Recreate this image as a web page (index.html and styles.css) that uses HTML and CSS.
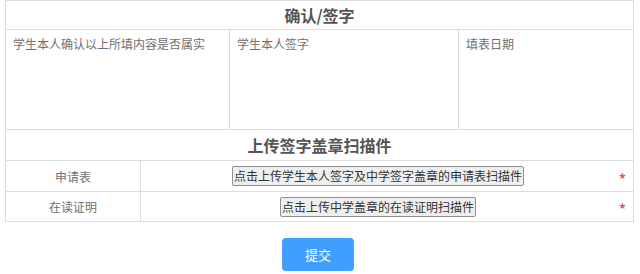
FILE: index.html
```html
<!DOCTYPE html>
<html lang="zh-CN">
<head>
<meta charset="utf-8">
<title>确认/签字</title>
<link rel="stylesheet" href="styles.css">
</head>
<body>
<div class="page">
  <table class="grid sign">
    <colgroup><col class="w1"><col class="w2"><col class="w3"></colgroup>
    <tr><th colspan="3" class="title t1">确认/签字</th></tr>
    <tr class="sign-row">
      <td>学生本人确认以上所填内容是否属实</td>
      <td>学生本人签字</td>
      <td>填表日期</td>
    </tr>
  </table>
  <table class="grid upload">
    <colgroup><col class="wl"><col class="wf"></colgroup>
    <tr><th colspan="2" class="title t2">上传签字盖章扫描件</th></tr>
    <tr>
      <td class="label">申请表</td>
      <td><div class="field h1"><div class="slot"><button class="file-btn">点击上传学生本人签字及中学签字盖章的申请表扫描件</button></div><span class="req">*</span></div></td>
    </tr>
    <tr>
      <td class="label">在读证明</td>
      <td><div class="field h2"><div class="slot"><button class="file-btn">点击上传中学盖章的在读证明扫描件</button></div><span class="req">*</span></div></td>
    </tr>
  </table>
  <div class="actions">
    <button class="submit">提交</button>
  </div>
</div>
</body>
</html>
```
FILE: styles.css
```css
html, body {
  margin: 0;
  padding: 0;
  background: #fff;
}
body {
  font-family: "Noto Sans CJK SC", "Microsoft YaHei", sans-serif;
  font-size: 12px;
  color: #707070;
}
.page {
  padding: 0 7px 0 5px;
}
.grid {
  width: 628px;
  border-collapse: collapse;
  table-layout: fixed;
}
.grid th, .grid td {
  border: 1px solid #dcdcdc;
  padding: 0;
}
.w1 { width: 224px; }
.w2 { width: 229px; }
.w3 { width: 175px; }
.wl { width: 135px; }
.wf { width: 493px; }
.upload {
  margin-top: -1px;
}
.title {
  font-size: 16px;
  font-weight: bold;
  color: #555;
  text-align: center;
  vertical-align: middle;
  line-height: 20px;
}
.t1 { height: 28px; }
.t2 { height: 30px; }
.sign-row td {
  height: 100px;
  vertical-align: top;
  padding: 5px 7px;
  box-sizing: border-box;
  line-height: 18px;
}
.label {
  text-align: center;
  vertical-align: middle;
}
.field {
  display: flex;
  align-items: center;
}
.h1 { height: 30px; }
.h2 { height: 29px; }
.slot {
  flex: 1;
  display: flex;
  justify-content: center;
}
.req {
  width: 15px;
  margin-right: 3px;
  text-align: center;
  color: #d9534f;
  font-size: 18px;
  line-height: 18px;
  padding-top: 5px;
}
.file-btn {
  font-family: inherit;
  font-size: 12px;
  color: #333;
  background: #efefef;
  border: 1px solid #8f8f8f;
  border-radius: 2px;
  padding: 0 1px;
  height: 20px;
  line-height: 16px;
}
.actions {
  display: flex;
  justify-content: center;
  padding-top: 16px;
  padding-right: 2px;
}
.submit {
  width: 72px;
  height: 33px;
  border: none;
  border-radius: 4px;
  background: #409eff;
  color: #fff;
  font-family: inherit;
  font-size: 13px;
}
```
